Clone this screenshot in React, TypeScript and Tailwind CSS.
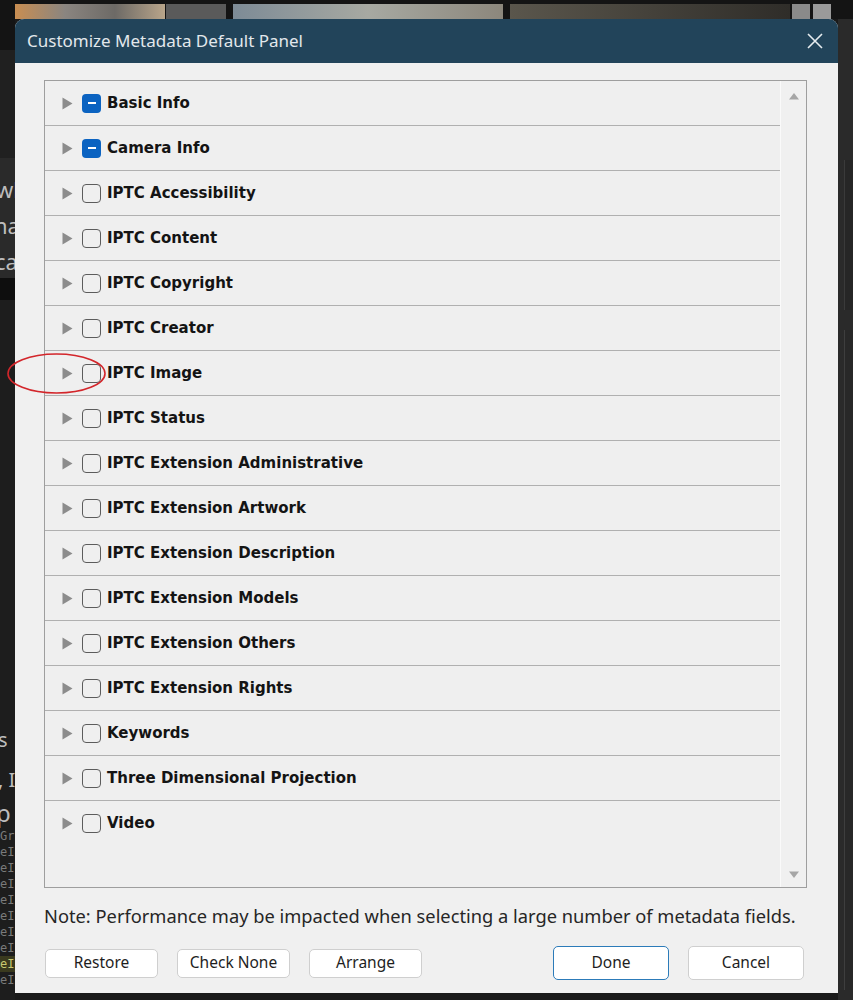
import React from 'react';

const rows = [
  { label: 'Basic Info', checked: true },
  { label: 'Camera Info', checked: true },
  { label: 'IPTC Accessibility' },
  { label: 'IPTC Content' },
  { label: 'IPTC Copyright' },
  { label: 'IPTC Creator' },
  { label: 'IPTC Image' },
  { label: 'IPTC Status' },
  { label: 'IPTC Extension Administrative' },
  { label: 'IPTC Extension Artwork' },
  { label: 'IPTC Extension Description' },
  { label: 'IPTC Extension Models' },
  { label: 'IPTC Extension Others' },
  { label: 'IPTC Extension Rights' },
  { label: 'Keywords' },
  { label: 'Three Dimensional Projection' },
  { label: 'Video' },
];

const ui = { fontFamily: '"Noto Sans", "Open Sans", sans-serif' };
const bold = { fontFamily: '"DejaVu Sans", Verdana, sans-serif' };
const mono = { fontFamily: '"DejaVu Sans Mono", monospace' };

function Row({ label, checked, last }: { label: string; checked?: boolean; last?: boolean }) {
  return (
    <div className={`h-[45px] flex items-center pl-[17px] ${last ? '' : 'border-b-[1.5px] border-[#b0b0b0]'}`}>
      <svg width="11" height="13" viewBox="0 0 11 13" className="shrink-0">
        <path d="M0.5 0.5 L10.5 6.5 L0.5 12.5 Z" fill="#8c8c8c" />
      </svg>
      {checked ? (
        <div className="ml-[9px] w-[19px] h-[19px] rounded-[4px] bg-[#0b63c1] flex items-center justify-center shrink-0">
          <div className="w-[8px] h-[2px] bg-white" />
        </div>
      ) : (
        <div className="ml-[9px] w-[19px] h-[19px] rounded-[4px] border-[1.5px] border-[#5c5c5c] shrink-0" />
      )}
      <span className="ml-[6px] text-[15px] font-bold text-[#141414]" style={bold}>
        {label}
      </span>
    </div>
  );
}

function Button({ children, primary, tall }: { children: React.ReactNode; primary?: boolean; tall?: boolean }) {
  return (
    <div
      className={`flex items-center justify-center bg-white rounded-[5px] text-[15.5px] text-[#1e1e1e] ${
        tall ? 'w-[116px] h-[34px]' : 'w-[113px] h-[29px]'
      } ${primary ? 'border-[1.5px] border-[#2c7bb9]' : 'border border-[#cfcfcf]'}`}
      style={ui}
    >
      {children}
    </div>
  );
}

function TopStrip() {
  return (
    <div className="h-[19px] shrink-0 flex pt-[4px] bg-[#141414]">
      <div className="w-[15px]" />
      <div className="w-[150px] bg-[linear-gradient(90deg,#c98e52,#8a8580,#6d6a66,#b9a58a)]" />
      <div className="w-[1px]" />
      <div className="w-[60px] bg-[#5a5a5a]" />
      <div className="w-[7px]" />
      <div className="w-[270px] bg-[linear-gradient(90deg,#7d8b96,#a7a9a2,#8c877c)]" />
      <div className="w-[7px]" />
      <div className="w-[280px] bg-[linear-gradient(90deg,#5a564c,#2f2d29)]" />
      <div className="w-[2px]" />
      <div className="w-[18px] bg-[#8a8a8a]" />
      <div className="w-[3px]" />
      <div className="w-[18px] bg-[#9a9a9a]" />
    </div>
  );
}

function LeftStrip() {
  return (
    <div className="w-[15px] shrink-0 flex flex-col overflow-hidden">
      <div className="h-[31px] bg-[#141414]" />
      <div className="h-[108px] bg-[#202020]" />
      <div className="h-[120px] bg-[#2a2a2a] flex flex-col pt-[16px] gap-[6px] text-[#bdbdbd] text-[22px] leading-[30px] whitespace-nowrap" style={ui}>
        <div className="-ml-[4px]">wh</div>
        <div className="-ml-[6px]">na</div>
        <div className="-ml-[5px]">ca</div>
      </div>
      <div className="h-[22px] bg-[#0e0e0e]" />
      <div className="flex-1 bg-[#1d1d1d] flex flex-col pt-[426px] text-[#bdbdbd] whitespace-nowrap" style={ui}>
        <div className="-ml-[2px] text-[20px] leading-[28px]">s</div>
        <div className="-ml-[2px] mt-[12px] text-[20px] leading-[28px]">, I</div>
        <div className="-ml-[4px] mt-[4px] text-[24px] leading-[30px]">p</div>
        <div className="flex flex-col text-[#7a7a7a] text-[12px] leading-[16px]" style={mono}>
          {['Gr', 'eI', 'eI', 'eI', 'eI', 'eI', 'eI', 'eI', 'eI', 'eI'].map((t, i) => (
            <div key={i} className={i === 8 ? 'bg-[#3a3a1e] text-[#c8c870]' : ''}>{t}</div>
          ))}
        </div>
      </div>
    </div>
  );
}

function RightStrip() {
  return (
    <div className="w-[15px] shrink-0 flex flex-col bg-[#2a2a2a]">
      <div className="h-[141px]" />
      <div className="ml-[6px] h-[150px] border-l border-[#3a3a3a] bg-[#262626]" />
      <div className="h-[20px]" />
      <div className="ml-[6px] flex-1 mb-[10px] border-l border-[#3e3e3e] bg-[#282828]" />
    </div>
  );
}

export default function App() {
  return (
    <div className="relative w-[853px] h-[1000px] bg-[#1a1a1a] overflow-hidden flex flex-col">
      <TopStrip />
      <div className="flex-1 flex">
        <LeftStrip />

        {/* dialog */}
        <div className="w-[823px] flex flex-col">
          <div className="h-[974px] flex flex-col rounded-t-[9px] overflow-hidden bg-[#f0f0f0]">
            <div className="h-[44px] shrink-0 bg-[#22445a] flex items-center justify-between pl-[12px] pr-[14px]">
              <span className="text-[17px] text-[#e2e8ec]" style={ui}>
                Customize Metadata Default Panel
              </span>
              <svg width="18" height="18" viewBox="0 0 18 18">
                <path d="M2 2 L16 16 M16 2 L2 16" stroke="#e6ecef" strokeWidth="1.6" />
              </svg>
            </div>

            <div className="flex-1 flex flex-col pl-[29px] pr-[31px] pt-[17px]">
              <div className="h-[808px] border border-[#9e9e9e] bg-[#efefef] flex">
                <div className="flex-1 flex flex-col">
                  {rows.map((r, i) => (
                    <Row key={r.label} label={r.label} checked={r.checked} last={i === rows.length - 1} />
                  ))}
                </div>
                <div className="w-[26px] border-l border-[#fafafa] bg-[#f0f0f0] flex flex-col items-center justify-between pt-[11px] pb-[8px]">
                  <svg width="12" height="8" viewBox="0 0 12 8">
                    <path d="M1 7.5 L6 1 L11 7.5 Z" fill="#a6a6a6" />
                  </svg>
                  <svg width="12" height="8" viewBox="0 0 12 8">
                    <path d="M1 0.5 L6 7 L11 0.5 Z" fill="#a6a6a6" />
                  </svg>
                </div>
              </div>

              <div className="mt-[17px] text-[18.3px] leading-[22px] text-[#262626] whitespace-nowrap" style={ui}>
                Note: Performance may be impacted when selecting a large number of metadata fields.
              </div>

              <div className="mt-[19px] flex items-center">
                <div className="flex items-center gap-[19px] ml-[1px]">
                  <Button>Restore</Button>
                  <Button>Check None</Button>
                  <Button>Arrange</Button>
                </div>
                <div className="ml-auto mr-[3px] flex items-center gap-[19px]">
                  <Button primary tall>Done</Button>
                  <Button tall>Cancel</Button>
                </div>
              </div>
            </div>
          </div>
        </div>

        <RightStrip />
      </div>

      {/* red annotation ellipse drawn over the screenshot */}
      <svg className="absolute left-0 top-0 pointer-events-none" width="853" height="1000">
        <ellipse cx="56.5" cy="373.5" rx="48.5" ry="19.5" fill="none" stroke="#d3262b" strokeWidth="1.6" />
      </svg>
    </div>
  );
}
